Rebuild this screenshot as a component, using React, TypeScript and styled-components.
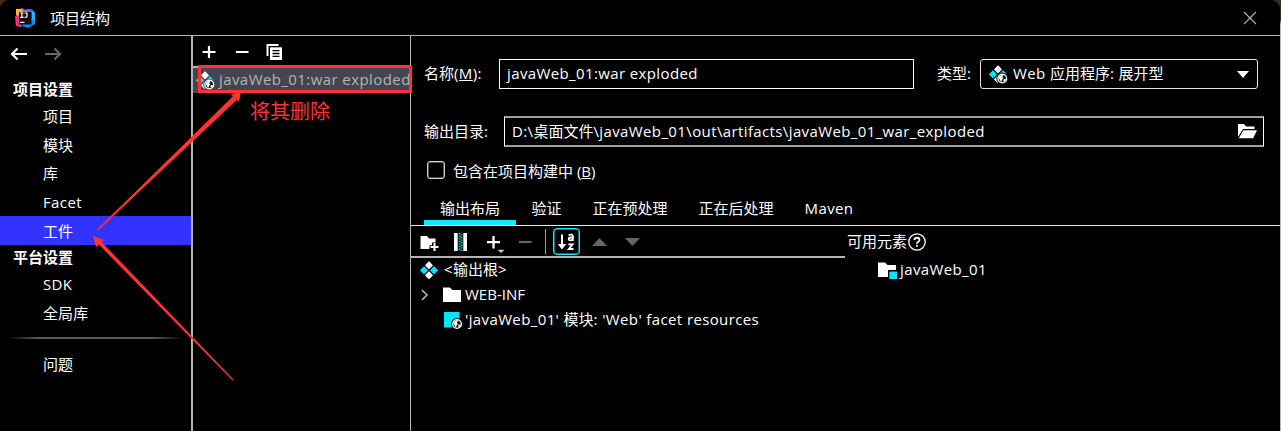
import React from "react";
import styled, { createGlobalStyle, css } from "styled-components";

const Global = createGlobalStyle`
  * { box-sizing: border-box; }
  html, body { margin: 0; background: #000; }
  body {
    width: 1281px; height: 431px; overflow: hidden; color: #fff;
    font: 15px/20px "Open Sans", "Noto Sans CJK SC", sans-serif;
    white-space: nowrap;
  }
  svg { display: block; flex: none; }
`;

const Backdrop = styled.div`
  width: 1281px; height: 431px; background: linear-gradient(#3d2a18 0 20px, #b5b5b5 24px);
  padding-right: 1px; position: relative;
`;
const Dialog = styled.div`
  height: 431px; background: #000; border-radius: 9px 9px 0 0;
  display: flex; flex-direction: column; overflow: hidden;
`;
const TitleBar = styled.header`
  height: 36px; flex: none; border-bottom: 1px solid #b4b4b4;
  display: flex; align-items: center; padding: 0 23px 0 15px; gap: 15px;
`;
const Title = styled.div`flex: 1;`;
const Body = styled.div`flex: 1; display: flex; min-height: 0;`;
const Latin = styled.span`letter-spacing: 0.38px;`;

const Sidebar = styled.nav`
  width: 193px; flex: none; border-right: 2px solid #b4b4b4;
  display: flex; flex-direction: column;
`;
const NavArrows = styled.div`
  height: 41px; display: flex; gap: 16px; padding: 10px 0 0 10px;
`;
const GroupTitle = styled.div`
  height: 25px; line-height: 25px; padding-left: 13px; font-weight: 700;
`;
const NavItem = styled.div<{ $active?: boolean }>`
  height: 28.6px; line-height: 28px; padding-left: 43px; letter-spacing: 0.1px;
  ${(p) => p.$active && css`background: #3333ff; height: 29px; line-height: 30px;`}
`;
const NavGroup = styled.div<{ $pull?: number }>`margin-bottom: ${(p) => p.$pull ?? 0}px;`;
const Separator = styled.div`
  height: 2px; margin: 10px 7px 11px;
  background: linear-gradient(90deg, transparent, #5c5c5c 18%, #5c5c5c 82%, transparent);
`;

const ArtifactPanel = styled.section`
  width: 218px; flex: none; border-right: 1px solid #b4b4b4; overflow: hidden;
`;
const ArtifactToolbar = styled.div`
  height: 32px; border-bottom: 2px solid #b4b4b4; display: flex; gap: 16.5px; padding: 8px 0 0 8px;
`;
const ArtifactRow = styled.div`
  height: 25px; background: #45454f; color: #b4b4b4; display: flex; align-items: center;
  gap: 4px; padding: 0 0 3px 3px; letter-spacing: 0.42px; overflow: hidden;
  svg { position: relative; top: 1px; }
`;

const Main = styled.main`flex: 1; min-width: 0; display: flex; flex-direction: column;`;
const FormRow = styled.div<{ $top: number; $height: number }>`
  display: flex; align-items: center; flex: none;
  margin-top: ${(p) => p.$top}px; height: ${(p) => p.$height}px; padding-left: 13px;
`;
const Label = styled.label<{ $width: number; $indent?: number }>`
  width: ${(p) => p.$width}px; padding: 0 0 2px ${(p) => p.$indent ?? 0}px; flex: none;
`;
const Field = styled.div<{ $width: number; $soft?: boolean }>`
  width: ${(p) => p.$width}px; height: 100%; flex: none;
  border: 1px solid #fff; display: flex; align-items: center; padding: 0 6px 0 7px;
  ${(p) => p.$soft && css`
    border-width: 2px 1px; border-top-color: #a0a0a0; border-bottom-color: #a0a0a0;
  `}
`;
const FieldText = styled.span`flex: 1; padding-bottom: 2px;`;
const Select = styled(Field)`
  border-color: #e4e4e4; border-radius: 3px; padding: 0 8px; gap: 5px;
`;
const Checkbox = styled.span`
  width: 18px; height: 18px; border: 1.5px solid #d4d4d4; border-radius: 3px; margin: 0 8px 2px 3px;
  box-shadow: inset 0 0 0 0.5px #999;
`;
const Tabs = styled.div`
  height: 35px; margin-top: 10px; border-bottom: 1px solid #e8e8e8; display: flex; padding-left: 13px; flex: none;
`;
const Tab = styled.div<{ $active?: boolean }>`
  padding: 5px 15.5px 0; height: 34px; line-height: 25px;
  ${(p) => p.$active && css`border-bottom: 5px solid #19e5f5; padding: 5px 16px 0;`}
`;
const Split = styled.div`display: flex; flex: 1;`;
const LayoutPane = styled.section`width: 434px; flex: none;`;
const LayoutToolbar = styled.div`
  height: 32px; border-bottom: 2px solid #b4b4b4; display: flex; align-items: center; padding: 1px 0 0 9px;
`;
const ToolSlot = styled.span<{ $w: number; $drop?: number }>`
  width: ${(p) => p.$w}px; flex: none; padding-top: ${(p) => p.$drop ?? 0}px;
`;
const ToolDivider = styled.span`width: 1px; height: 25px; background: #a0a0a0; margin-right: 7px;`;
const SortButton = styled.span`
  width: 27px; height: 27px; border: 1px solid #19e5f5; border-radius: 4px; margin-right: 12px;
  box-shadow: inset 0 0 0 0.5px #19e5f5;
  display: flex; align-items: center; justify-content: center;
`;
const Tree = styled.div`height: 75px;`;
const TreeRow = styled.div<{ $indent: number; $gap?: number }>`
  height: 25px; display: flex; align-items: center; gap: ${(p) => p.$gap ?? 3}px;
  padding: 0 0 1px ${(p) => p.$indent}px;
  & > span:last-child { padding-bottom: 3px; }
`;
const AvailablePane = styled.section`flex: 1; padding-left: 2px;`;
const AvailableTitle = styled.div`
  height: 32px; display: flex; align-items: center; gap: 1px;
  span { padding-bottom: 2px; }
`;
const Annotation = styled.div`
  position: absolute; left: 250px; top: 99px; color: #ff3333; font-size: 20px; line-height: 26px;
`;
const Marks = styled.svg`position: absolute; left: 0; top: 0; pointer-events: none;`;

const Tint = "#00e5ff";

const Logo = () => (
  <svg width="20" height="20" viewBox="0 0 20 20">
    <path d="M1 3 7 0 11 3 8 10 1 13Z" fill="#fe7a3c" />
    <path d="M0 9 4 4 9 12 6 19 1 18Z" fill="#f0327d" />
    <path d="M1 1h5l2 3-5 4-2-2Z" fill="#fdb840" />
    <path d="M12 2 16 1 20 5v11l-7 4-6-2 5-8Z" fill="#0a8cff" />
    <path d="M17 2 20 5v8l-3-2Z" fill="#24b5ff" />
    <path d="M8 2 14 1 13 4H8Z" fill="#b44cf0" />
    <rect x="4" y="4" width="12.5" height="12.5" fill="#160b10" />
    <path d="M5.2 5h3.4M6.9 5v4.4M5.2 9.4h3.4M9.5 5h2.5V8.2q0 1.2-1.2 1.2H9.6M5 14.4h4.5" stroke="#fff" strokeWidth="1.2" fill="none" />
  </svg>
);
const Arrow = ({ right }: { right?: boolean }) => (
  <svg width="18" height="16" viewBox="0 0 18 16" fill="none" stroke={right ? "#666" : "#fff"} strokeWidth="2.2">
    <path d={right ? "M1 8h15M10.5 2.5 16 8l-5.5 5.5" : "M17 8H2M7.5 2.5 2 8l5.5 5.5"} />
  </svg>
);
const Plus = () => (
  <svg width="16" height="16" viewBox="0 0 16 16"><path d="M8 2v12M1.5 8h13" stroke="#fff" strokeWidth="2.2" /></svg>
);
const Minus = ({ color = "#fff" }: { color?: string }) => (
  <svg width="16" height="16" viewBox="0 0 16 16"><path d="M2 8h12.5" stroke={color} strokeWidth="2.2" /></svg>
);
const Copy = () => (
  <svg width="17" height="17" viewBox="0 0 17 17">
    <path d="M0.5 0h12v2h-10v10h-2Z" fill="#fff" />
    <path d="M4 3.3H16V16H4Z" fill="#fff" />
    <path d="M6.5 6.7h7M6.5 9.5h7M6.5 12.3h7" stroke="#000" strokeWidth="1.3" />
  </svg>
);
const Globe = ({ x, y, bg }: { x: number; y: number; bg: string }) => (
  <g transform={`translate(${x} ${y})`}>
    <circle r="6" fill={bg} />
    <circle r="4.4" fill="#111" stroke="#fff" strokeWidth="1.3" />
    <path d="M-4-1.6 0-4.2 1.2-3-.2-1.4 1-.2-.2 1.1-1 3.8-2.4 1.5ZM1.6.4 4 .8 2 3.6 1 2.2Z" fill="#fff" />
  </g>
);
const Artifact = ({ web, bg = "#000" }: { web?: boolean; bg?: string }) => (
  <svg width="19" height="19" viewBox="0 0 19 19">
    <g strokeLinejoin="round" strokeWidth="1.1">
      <path d="M9 1 12.3 4.3 9 7.6 5.7 4.3Z" fill="#fff" stroke="#fff" />
      <path d="M4 6 7.3 9.3 4 12.6 .7 9.3ZM14 6 17.3 9.3 14 12.6 10.7 9.3Z" fill={Tint} stroke={Tint} />
      <path d="M9 11 12.3 14.3 9 17.6 5.7 14.3Z" fill="#fff" stroke="#fff" />
    </g>
    {web && <Globe x={13.3} y={13.5} bg={bg} />}
  </svg>
);
const Folder = ({ module }: { module?: boolean }) => (
  <svg width="19" height="18" viewBox="0 0 19 18">
    <path d="M0 1.5h7l2.5 2.5H18v12H0Z" fill="#fff" />
    {module && <><path d="M10 9h9v9h-9Z" fill="#000" /><path d="M11.3 10.5H19V18h-7.7Z" fill={Tint} /></>}
  </svg>
);
const OpenFolder = () => (
  <svg width="19" height="15" viewBox="0 0 19 15">
    <path d="M0 0h6l2 2.5h8.5V5H5L0 13Z" fill="#fff" />
    <path d="M5.3 6.3H19L15.2 14.3H.8Z" fill="#fff" />
  </svg>
);
const NewFolder = () => (
  <svg width="19" height="16" viewBox="0 0 19 16">
    <path d="M0.5 1H7l2 2.5h6.5V7.5H12v2.8H9.5V14h-9Z" fill="#fff" />
    <path d="M14.5 8v8M10.5 12h8" stroke="#fff" strokeWidth="2" />
  </svg>
);
const Archive = () => (
  <svg width="14" height="18" viewBox="0 0 14 18">
    <path d="M0 0H3.7v18H0ZM9.3 0H13v18H9.3Z" fill="#fff" />
    <path d="M5.5 0v18M7.6 1.3v17" stroke={Tint} strokeWidth="1.8" strokeDasharray="1.3 1.3" />
  </svg>
);
const AddMenu = () => (
  <svg width="20" height="20" viewBox="0 0 20 20">
    <path d="M7.5 3v12.5M1 9.2h13" stroke="#fff" strokeWidth="2.3" />
    <path d="M11.5 16.8h7L15 20Z" fill="#ccc" />
  </svg>
);
const SortAz = () => (
  <svg width="20" height="20" viewBox="0 0 20 20" fill="none" stroke="#fff">
    <path d="M5 2.5v11" strokeWidth="2" />
    <path d="M.8 12h8.4L5 17.5Z" fill="#fff" stroke="none" />
    <path d="M11.6 3.2Q15.9 1.6 15.9 4.4V9M15.9 5.5h-2.2q-2 0-2 1.4t1.6 1.4q1.6 0 2.6-1.3M11.3 12.3h4.4L11.8 17h4.7" strokeWidth="1.8" />
  </svg>
);
const Triangle = ({ down }: { down?: boolean }) => (
  <svg width="15" height="8" viewBox="0 0 15 8"><path d={down ? "M0 0h15L7.5 8Z" : "M0 8h15L7.5 0Z"} fill="#666" /></svg>
);
const Help = () => (
  <svg width="18" height="18" viewBox="0 0 18 18" fill="none" stroke="#fff">
    <circle cx="9" cy="9" r="8.2" strokeWidth="1.3" />
    <path d="M6.5 7q0-2.4 2.5-2.4T11.5 7Q11.5 8 10 9T9 11M9 12v1.8" strokeWidth="1.7" />
  </svg>
);
const WebResource = () => (
  <svg width="19" height="19" viewBox="0 0 19 19">
    <path d="M0 1h15.5v15.5H0Z" fill={Tint} />
    <Globe x={13} y={13} bg="#000" />
  </svg>
);

export default function App() {
  return (
    <>
      <Global />
      <Backdrop>
        <Dialog>
          <TitleBar>
            <Logo />
            <Title>项目结构</Title>
            <svg width="14" height="14" viewBox="0 0 14 14"><path d="M1 1 13 13M13 1 1 13" stroke="#b4b4b4" strokeWidth="1.1" /></svg>
          </TitleBar>
          <Body>
            <Sidebar>
              <NavArrows><Arrow /><Arrow right /></NavArrows>
              <NavGroup>
                <GroupTitle>项目设置</GroupTitle>
                <NavItem>项目</NavItem>
                <NavItem>模块</NavItem>
                <NavItem>库</NavItem>
                <NavItem><Latin>Facet</Latin></NavItem>
                <NavItem $active>工件</NavItem>
              </NavGroup>
              <NavGroup $pull={-1}>
                <GroupTitle>平台设置</GroupTitle>
                <NavItem><Latin>SDK</Latin></NavItem>
                <NavItem>全局库</NavItem>
              </NavGroup>
              <Separator />
              <NavItem>问题</NavItem>
            </Sidebar>
            <ArtifactPanel>
              <ArtifactToolbar><Plus /><Minus /><Copy /></ArtifactToolbar>
              <ArtifactRow><Artifact web bg="#45454f" />javaWeb_01:war exploded</ArtifactRow>
            </ArtifactPanel>
            <Main>
              <FormRow $top={23} $height={30}>
                <Label $width={75}>名称<Latin>(<u>M</u>):</Latin></Label>
                <Field $width={415}><FieldText><Latin>javaWeb_01:war exploded</Latin></FieldText></Field>
                <Label $width={66} $indent={23}>类型:</Label>
                <Select $width={278}>
                  <Artifact web />
                  <FieldText><Latin>Web </Latin>应用程序<Latin>: </Latin>展开型</FieldText>
                  <svg width="12" height="7" viewBox="0 0 12 7"><path d="M0 0h12L6 7Z" fill="#fff" /></svg>
                </Select>
              </FormRow>
              <FormRow $top={27} $height={31}>
                <Label $width={80}>输出目录:</Label>
                <Field $width={760} $soft>
                  <FieldText>
                    <Latin>D:\</Latin>桌面文件<Latin>\javaWeb_01\out\artifacts\javaWeb_01_war_exploded</Latin>
                  </FieldText>
                  <OpenFolder />
                </Field>
              </FormRow>
              <FormRow $top={13} $height={21}>
                <Checkbox />
                <span>包含在项目构建中 (<u>B</u>)</span>
              </FormRow>
              <Tabs>
                <Tab $active>输出布局</Tab>
                <Tab>验证</Tab>
                <Tab>正在预处理</Tab>
                <Tab>正在后处理</Tab>
                <Tab><Latin>Maven</Latin></Tab>
              </Tabs>
              <Split>
                <LayoutPane>
                  <LayoutToolbar>
                    <ToolSlot $w={34} $drop={2}><NewFolder /></ToolSlot>
                    <ToolSlot $w={32} $drop={1}><Archive /></ToolSlot>
                    <ToolSlot $w={31} $drop={2}><AddMenu /></ToolSlot>
                    <ToolSlot $w={28} $drop={1}><Minus color="#666" /></ToolSlot>
                    <ToolDivider />
                    <SortButton><SortAz /></SortButton>
                    <ToolSlot $w={33}><Triangle /></ToolSlot>
                    <Triangle down />
                  </LayoutToolbar>
                  <Tree>
                    <TreeRow $indent={9} $gap={5}><Artifact /><span><Latin>&lt;</Latin>输出根<Latin>&gt;</Latin></span></TreeRow>
                    <TreeRow $indent={10}>
                      <ToolSlot $w={19}>
                        <svg width="8" height="12" viewBox="0 0 8 12"><path d="M1 1 6 6 1 11" fill="none" stroke="#b4b4b4" strokeWidth="1.6" /></svg>
                      </ToolSlot>
                      <Folder /><span>WEB-INF</span>
                    </TreeRow>
                    <TreeRow $indent={33} $gap={2}>
                      <WebResource />
                      <span><Latin>'javaWeb_01' </Latin>模块<Latin>: 'Web' facet resources</Latin></span>
                    </TreeRow>
                  </Tree>
                </LayoutPane>
                <AvailablePane>
                  <AvailableTitle><span>可用元素</span><Help /></AvailableTitle>
                  <TreeRow $indent={31}><Folder module /><span><Latin>javaWeb_01</Latin></span></TreeRow>
                </AvailablePane>
              </Split>
            </Main>
          </Body>
        </Dialog>
        <Marks width="1281" height="431" viewBox="0 0 1281 431">
          <rect x="199.5" y="66.5" width="211" height="25" fill="none" stroke="#ff3333" strokeWidth="3" />
          <path d="M97 229.4 98 230.6 237 99.8 239 102 241 92 230.5 94 233 96.2Z" fill="#ff3333" />
          <path d="M232.6 380.4 233.4 379.6 101.6 242 104 240 93 236 96 247 99 244.8Z" fill="#ff3333" />
        </Marks>
        <Annotation>将其删除</Annotation>
      </Backdrop>
    </>
  );
}
